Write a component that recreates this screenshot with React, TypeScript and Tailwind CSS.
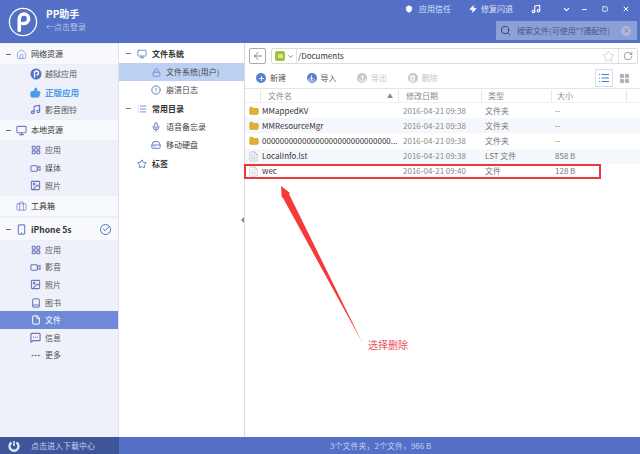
import React from 'react';
import {
  ArrowLeft, Book, Briefcase, Check, ChevronDown, CircleAlert, Download, File, FileText, Folder, HardDrive, Home, Image, LayoutGrid,
  List, Lock, MessageSquareMore, Mic, Minus, Monitor, MoreHorizontal, Music, Plus, RotateCw, Search, Shield, Smartphone, Square,
  Star, ThumbsUp, Trash2, Upload, Video, X, Zap,
} from 'lucide-react';

const font = { fontFamily: '"Noto Sans CJK SC", "Liberation Sans", sans-serif' };

const PLogo = ({ size }: { size: number }) => (
  <svg width={size} height={size} viewBox="0 0 32 32" fill="none" stroke="white">
    <circle cx="16" cy="16" r="14.5" strokeWidth="1.4" />
    <path d="M12 25V12.5a5 5 0 1 1 5 5h-1.5" strokeWidth="3.8" strokeLinecap="round" />
  </svg>
);

const SmallP = () => (
  <svg width="12" height="12" viewBox="0 0 12 12">
    <circle cx="6" cy="6" r="5.5" fill="#5c72c4" />
    <path d="M4.5 9.5V5a2 2 0 1 1 2 2" stroke="white" strokeWidth="1.3" fill="none" />
  </svg>
);

const SideHead = ({ icon, label, bold, right, h = 'h-[22px]' }: { icon: React.ReactNode; label: string; bold?: boolean; right?: React.ReactNode; h?: string }) => (
  <div className={`flex items-center ${h} bg-[#f8f9fd] border-y border-[#eceef5]`}>
    <span className="w-[14px] pl-[5px] text-[#555]">{bold !== undefined ? <Minus size={7} strokeWidth={3} /> : null}</span>
    <span className="w-[15px] flex justify-center text-[#6c80c6]">{icon}</span>
    <span className={`ml-[2px] text-[#333] ${bold ? 'font-bold text-[8.5px]' : 'text-[8px]'}`}>{label}</span>
    {right}
  </div>
);

const SideItem = ({ icon, label, active, blue }: { icon: React.ReactNode; label: string; active?: boolean; blue?: boolean }) => (
  <div className={`flex items-center h-[17.6px] pl-[28px] ${active ? 'bg-[#6e8ad6] text-white' : 'text-[#555]'}`}>
    <span className={`w-[15px] flex justify-center ${active ? 'text-white' : 'text-[#6c74bd]'}`}>{icon}</span>
    <span className={`ml-[2px] ${blue ? 'text-[#4d9be8] font-bold text-[8.5px]' : 'text-[8px]'}`}>{label}</span>
  </div>
);

const TreeHead = ({ icon, label, dash = true }: { icon: React.ReactNode; label: string; dash?: boolean }) => (
  <div className="flex items-center h-[19px]">
    <span className="w-[16px] pl-[6px] text-[#666]">{dash ? <Minus size={7} strokeWidth={3} /> : null}</span>
    <span className="w-[14px] flex justify-center text-[#5e7cc6]">{icon}</span>
    <span className="ml-[3px] text-[8px] font-bold text-[#333]">{label}</span>
  </div>
);

const TreeItem = ({ icon, label, active }: { icon: React.ReactNode; label: string; active?: boolean }) => (
  <div className={`flex items-center h-[18px] pl-[30px] ${active ? 'bg-[#bcd0f2]' : ''}`}>
    <span className="w-[14px] flex justify-center text-[#6a80c8]">{icon}</span>
    <span className="ml-[3px] text-[8px] text-[#444]">{label}</span>
  </div>
);

const Action = ({ icon, label, disabled }: { icon: React.ReactNode; label: string; disabled?: boolean }) => (
  <div className="flex items-center w-[50.5px]">
    <span className={`w-[10px] h-[10px] rounded-full flex items-center justify-center text-white ${disabled ? 'bg-[#c8c8c8]' : 'bg-[#5b7fcf]'}`}>{icon}</span>
    <span className={`ml-[4px] text-[8px] ${disabled ? 'text-[#c4c4c4]' : 'text-[#555]'}`}>{label}</span>
  </div>
);

const files = [
  { name: 'MMappedKV', date: '2016-04-21 09:38', type: '文件夹', size: '--', dir: true },
  { name: 'MMResourceMgr', date: '2016-04-21 09:38', type: '文件夹', size: '--', dir: true, alt: true },
  { name: '00000000000000000000000000000...', date: '2016-04-21 09:38', type: '文件夹', size: '--', dir: true },
  { name: 'LocalInfo.lst', date: '2016-04-21 09:38', type: 'LST 文件', size: '858 B', alt: true },
  { name: 'wec', date: '2016-04-21 09:40', type: '文件', size: '128 B' },
];

export default function App() {
  return (
    <div className="relative w-[640px] h-[454px] flex flex-col bg-white overflow-hidden" style={font}>
      {/* title bar */}
      <div className="h-[43px] bg-[#5470c6] flex shrink-0">
        <div className="flex items-center pl-[8px] w-[119px]">
          <PLogo size={30} />
          <div className="ml-[8px] leading-none -mt-[3px]">
            <div className="text-[10px] font-bold text-white">PP助手</div>
            <div className="mt-[4px] text-[8px] text-[#b4c2ea]">←点击登录</div>
          </div>
        </div>
        <div className="flex-1 flex flex-col items-end">
          <div className="flex items-center h-[18px] text-[8px] text-[#dce3f7]">
            <Shield size={8} fill="white" className="text-white" />
            <span className="ml-[6px]">应用信任</span>
            <Zap size={8} fill="white" className="ml-[18px] text-white" />
            <span className="ml-[4px]">修复闪退</span>
            <Music size={10} strokeWidth={2.6} className="ml-[18px] text-white" />
            <ChevronDown size={9} strokeWidth={3} className="ml-[21px] text-white" />
            <Minus size={7} strokeWidth={3} className="ml-[10px] text-white" />
            <Square size={6} strokeWidth={3} className="ml-[14px] text-white" />
            <X size={8} strokeWidth={3} className="ml-[14px] mr-[10px] text-white" />
          </div>
          <div className="mt-[3px] mr-[3px] w-[141px] h-[19px] bg-[#8c9fd8] flex items-center pl-[4px] pr-[6px]">
            <Search size={11} strokeWidth={2} className="text-[#2f3d66]" />
            <span className="ml-[6px] text-[8px] text-[#4a5680] whitespace-nowrap flex-1">搜索文件(可使用*?通配符)</span>
            <span className="w-[10px] h-[10px] rounded-full bg-[#b0b8d6] flex items-center justify-center text-[#6f7ba8]"><X size={7} strokeWidth={3} /></span>
          </div>
        </div>
      </div>

      <div className="flex-1 flex min-h-0">
        {/* left nav */}
        <div className="w-[119px] shrink-0 bg-[#eef1f9] border-r border-[#dfe3f0] flex flex-col">
          <SideHead bold={false} icon={<Home size={11} strokeWidth={1.4} />} label="网络资源" />
          <div className="flex flex-col h-[54px] justify-center">
            <SideItem icon={<SmallP />} label="越狱应用" />
            <SideItem icon={<ThumbsUp size={11} fill="#4d9be8" className="text-[#4d9be8]" />} label="正版应用" blue />
            <SideItem icon={<Music size={11} strokeWidth={2.4} />} label="影音图铃" />
          </div>
          <SideHead bold={false} icon={<Monitor size={11} strokeWidth={2.4} />} label="本地资源" />
          <div className="flex flex-col h-[54px] justify-center">
            <SideItem icon={<LayoutGrid size={10} strokeWidth={2.6} />} label="应用" />
            <SideItem icon={<Video size={11} strokeWidth={2.2} />} label="媒体" />
            <SideItem icon={<Image size={11} strokeWidth={2.2} />} label="照片" />
          </div>
          <SideHead icon={<Briefcase size={11} strokeWidth={1.6} />} label="工具箱" />
          <SideHead
            bold
            h="h-[24px]"
            icon={<Smartphone size={11} strokeWidth={2.4} />}
            label="iPhone 5s"
            right={
              <span className="ml-auto mr-[7px] w-[11px] h-[11px] rounded-full border border-[#5470c6] flex items-center justify-center text-[#5470c6]">
                <Check size={8} strokeWidth={3} />
              </span>
            }
          />
          <SideItem icon={<LayoutGrid size={10} strokeWidth={2.6} />} label="应用" />
          <SideItem icon={<Video size={11} strokeWidth={2.2} />} label="影音" />
          <SideItem icon={<Image size={11} strokeWidth={2.2} />} label="照片" />
          <SideItem icon={<Book size={10} strokeWidth={2.4} />} label="图书" />
          <SideItem active icon={<File size={10} strokeWidth={2.4} />} label="文件" />
          <SideItem icon={<MessageSquareMore size={11} strokeWidth={2.6} />} label="信息" />
          <SideItem icon={<MoreHorizontal size={11} className="text-[#666]" />} label="更多" />
        </div>

        {/* folder tree */}
        <div className="w-[126px] shrink-0 pt-[1px] border-r border-[#dcdcdc]">
          <TreeHead icon={<Monitor size={10} />} label="文件系统" />
          <TreeItem active icon={<Lock size={9} />} label="文件系统(用户)" />
          <TreeItem icon={<CircleAlert size={10} strokeWidth={2.4} />} label="崩溃日志" />
          <TreeHead icon={<List size={10} />} label="常用目录" />
          <TreeItem icon={<Mic size={10} strokeWidth={2.4} />} label="语音备忘录" />
          <TreeItem icon={<HardDrive size={10} strokeWidth={2.4} />} label="移动硬盘" />
          <TreeHead dash={false} icon={<Star size={10} strokeWidth={2.4} />} label="标签" />
        </div>

        {/* main pane */}
        <div className="flex-1 flex flex-col min-w-0">
          <div className="flex items-center h-[25px] pl-[4px] pr-[2px] gap-[5px] pt-[1px]">
            <span className="w-[17px] h-[16px] border border-[#aaa] rounded-[2px] flex items-center justify-center text-[#555]">
              <ArrowLeft size={12} strokeWidth={1.5} />
            </span>
            <div className="flex-1 h-[16px] border border-[#dcdcdc] rounded-[2px] flex items-center pl-[3px]">
              <span className="w-[10px] h-[10px] rounded-[2px] bg-[#9cc43c] flex items-center justify-center">
                <span className="w-[5px] h-[4px] rounded-t-[2px] bg-[#e6e08a]" />
              </span>
              <ChevronDown size={7} strokeWidth={3} className="ml-[2px] text-[#777]" />
              <span className="ml-[2px] pl-[1px] border-l border-[#e2e2e2] text-[8px] text-[#333] leading-[14px]">/Documents</span>
              <Star size={13} strokeWidth={1} className="ml-auto text-[#bbb]" />
              <span className="ml-[3px] w-[19px] h-[14px] border-l border-[#e2e2e2] flex items-center justify-center text-[#666]">
                <RotateCw size={10} strokeWidth={1.5} />
              </span>
            </div>
          </div>

          <div className="flex items-center h-[21px] pl-[11px] pr-[5px] border-b border-[#e4e4e4]">
            <Action icon={<Plus size={7} strokeWidth={3} />} label="新建" />
            <Action icon={<Download size={7} strokeWidth={3} />} label="导入" />
            <Action disabled icon={<Upload size={7} strokeWidth={3} />} label="导出" />
            <Action disabled icon={<Trash2 size={7} strokeWidth={3} />} label="删除" />
            <div className="ml-auto flex items-center">
              <span className="w-[18px] h-[18px] border border-[#d7def0] flex items-center justify-center text-[#4d78d0]">
                <List size={12} strokeWidth={2.2} />
              </span>
              <span className="w-[22px] flex justify-center text-[#aab0b8]">
                <LayoutGrid size={11} fill="#aab0b8" />
              </span>
            </div>
          </div>

          <div className="flex items-center h-[14px] text-[8px] text-[#8a8a8a] border-b border-[#f0f0f0]">
            <div className="w-[154px] flex items-center border-r border-[#e6e6e6]">
              <span className="ml-[15px] pl-[7px] border-l border-[#e6e6e6]">文件名</span>
              <span className="ml-auto mr-[5px] text-[6px]">▲</span>
            </div>
            <div className="w-[83px] pl-[7px] border-r border-[#e6e6e6]">修改日期</div>
            <div className="w-[70px] pl-[6px] border-r border-[#e6e6e6]">类型</div>
            <div className="w-[75px] pl-[5px] border-r border-[#e6e6e6]">大小</div>
          </div>

          {files.map((f) => (
            <div key={f.name} className={`flex items-center h-[15.2px] text-[8px] ${f.alt ? 'bg-[#f4f8fc]' : ''}`}>
              <div className="w-[154px] shrink-0 pl-[2px] flex items-center text-[#333] whitespace-nowrap overflow-hidden">
                <span className="w-[13px] shrink-0 flex justify-center">
                  {f.dir ? <Folder size={10} fill="#e0b030" className="text-[#d4a32a]" /> : <FileText size={11} strokeWidth={1} className="text-[#999]" />}
                </span>
                <span className="ml-[2px]">{f.name}</span>
              </div>
              <div className="w-[83px] shrink-0 pl-[4px] text-[#888] whitespace-nowrap">{f.date}</div>
              <div className="w-[70px] shrink-0 pl-[3px] text-[#777]">{f.type}</div>
              <div className="pl-[3px] text-[#777]">{f.size}</div>
            </div>
          ))}
        </div>
      </div>

      {/* status bar */}
      <div className="h-[17px] shrink-0 bg-[#5470c6] flex items-center">
        <div className="w-[119px] h-full bg-[#3f5599] flex items-center pl-[8px]">
          <svg width="12" height="12" viewBox="0 0 12 12" fill="none" stroke="#dfe5f7" strokeWidth="2.4">
            <path d="M3.5 2.5a4.5 4.5 0 1 0 5 0" />
            <path d="M6 1v5" strokeWidth="1.6" />
          </svg>
          <span className="ml-[11px] text-[8px] text-[#c9d3f0] whitespace-nowrap">点击进入下载中心</span>
        </div>
        <span className="ml-[211px] text-[8px] text-[#c3cff0] whitespace-nowrap">3个文件夹，2个文件，986 B</span>
      </div>

      {/* collapse handle */}
      <span className="absolute left-[241px] top-[217px] w-0 h-0 border-y-[3px] border-y-transparent border-r-[3px] border-r-[#888]" />

      {/* red annotation */}
      <div className="absolute left-[244px] top-[164px] w-[357px] h-[15px] border-2 border-[#e8383d]" />
      <svg className="absolute left-[270px] top-[178px]" width="110" height="170" viewBox="0 0 110 170">
        <polygon points="11,8 20,15 19,16 92,164 13,20 11.7,19" fill="#f53a3a" />
      </svg>
      <span className="absolute left-[368px] top-[338px] text-[10px] leading-[14px] text-[#e8525a]">选择删除</span>
    </div>
  );
}
